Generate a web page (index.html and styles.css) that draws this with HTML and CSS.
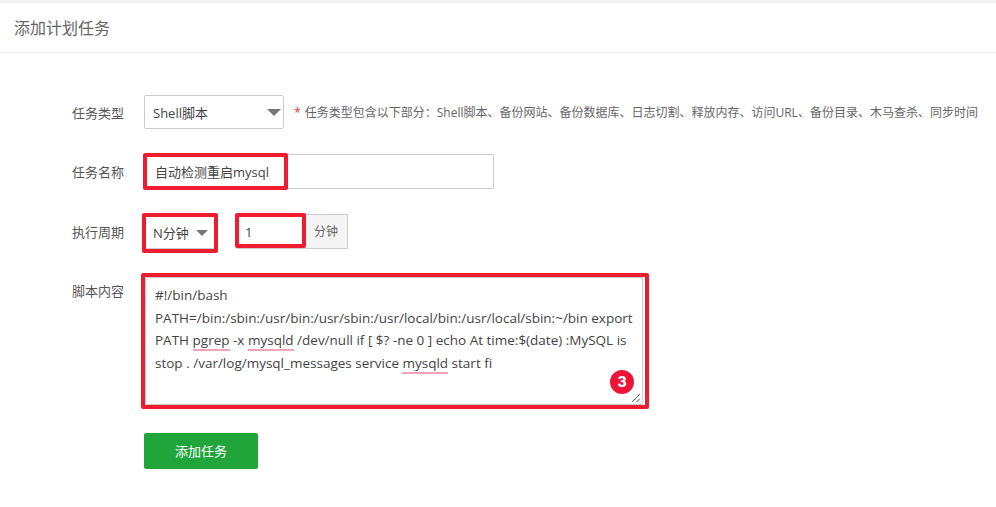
FILE: index.html
```html
<!DOCTYPE html>
<html lang="zh-CN">
<head>
<meta charset="utf-8">
<title>添加计划任务</title>
<link rel="stylesheet" href="styles.css">
</head>
<body>
<header class="head">添加计划任务</header>
<main class="form">
  <div class="row row-type">
    <label class="label">任务类型</label>
    <div class="select select-type">Shell脚本<i class="caret"></i></div>
    <p class="hint"><span class="star">*</span> 任务类型包含以下部分：Shell脚本、备份网站、备份数据库、日志切割、释放内存、访问URL、备份目录、木马查杀、同步时间</p>
  </div>
  <div class="row row-name">
    <label class="label">任务名称</label>
    <div class="input input-name">自动检测重启mysql<b class="mark mark-name"></b></div>
  </div>
  <div class="row row-cycle">
    <label class="label">执行周期</label>
    <div class="select select-cycle">N分钟<i class="caret"></i><b class="mark mark-cycle"></b></div>
    <div class="group">
      <div class="input input-num">1<b class="mark mark-num"></b></div>
      <div class="addon">分钟</div>
    </div>
  </div>
  <div class="row row-script">
    <label class="label label-top">脚本内容</label>
    <div class="textarea">
      #!/bin/bash<br>
      PATH=/bin:/sbin:/usr/bin:/usr/sbin:/usr/local/bin:/usr/local/sbin:~/bin export<br>
      PATH <u class="spell">pgrep</u> -x <u class="spell">mysqld</u> /dev/null if [ $? -ne 0 ] echo At time:$(date) :MySQL is<br>
      stop . /var/log/mysql_messages service <u class="spell">mysqld</u> start fi
      <b class="mark mark-script"></b>
      <span class="badge">3</span>
      <svg class="grip" width="10" height="10" viewBox="0 0 10 10"><path d="M1 9 9 1M5.500 9 9 5.500" stroke="#555" stroke-width="1" fill="none"/></svg>
    </div>
  </div>
  <button class="submit" type="button">添加任务</button>
</main>
</body>
</html>
```
FILE: styles.css
```css
* { box-sizing: border-box; }
html, body { margin: 0; height: 100%; background: #fff; overflow: hidden; }
body {
  font-family: "Open Sans", "Noto Sans CJK SC", sans-serif;
  font-size: 13px;
  color: #555;
  border-top: 3px solid #f0f0f0;
}
.head {
  height: 50px;
  padding-left: 14px;
  line-height: 50px;
  font-size: 16px;
  color: #666;
  border-bottom: 1px solid #f0f0f0;
}
.form { padding: 42px 0 0 72px; }
.row { display: flex; align-items: center; }
.row-type { height: 34px; }
.row-name { height: 35px; margin-top: 25px; }
.row-cycle { height: 35px; margin-top: 25px; }
.row-script { height: 128px; margin-top: 28px; align-items: flex-start; }
.label { width: 72px; flex: none; color: #555; }
.label-top { padding-top: 4px; }
.select, .input, .textarea {
  position: relative;
  background: #fff;
  border: 1px solid #ccc;
  color: #444;
}
.select { display: flex; align-items: center; padding-left: 8px; border-radius: 2px; }
.select-type { width: 140px; height: 34px; flex: none; }
.select-cycle { width: 72px; height: 33px; margin-top: 1px; }
.caret {
  position: absolute;
  right: 2px;
  top: 13px;
  border-left: 7px solid transparent;
  border-right: 7px solid transparent;
  border-top: 7px solid #777;
}
.select-cycle .caret { right: 7px; top: 13px; border-left-width: 6px; border-right-width: 6px; border-top-width: 6px; }
.hint { margin: 0 0 0 10px; font-size: 12px; color: #666; white-space: nowrap; }
.star { color: #e33; margin-right: 1px; }
.input { display: flex; align-items: center; padding-left: 10px; border-radius: 1px; }
.input-name { width: 350px; height: 35px; }
.group { display: flex; margin-left: 20px; }
.input-num { width: 69px; height: 35px; padding-left: 8px; }
.addon {
  width: 43px;
  height: 35px;
  line-height: 33px;
  text-align: center;
  font-size: 12px;
  color: #666;
  background: #f5f5f5;
  border: 1px solid #ccc;
  border-left: 0;
}
.textarea {
  width: 498px;
  height: 128px;
  padding: 6px 0 0 9px;
  font-size: 13.5px;
  line-height: 22.500px;
  white-space: nowrap;
  margin-left: 1px;
}
.spell { text-decoration: none; border-bottom: 2px solid #f3a3b8; }
.mark { position: absolute; border: 4px solid #ee1c2e; border-radius: 2px; pointer-events: none; }
.mark-name { left: -2px; top: -2px; width: 145px; height: 37px; }
.mark-cycle { left: -3px; top: -4px; width: 76px; height: 40px; }
.mark-num { left: -2px; top: -2px; width: 71px; height: 35px; }
.mark-script { left: -5px; top: -5px; width: 508px; height: 136px; }
.badge {
  position: absolute;
  right: 8px;
  bottom: 10px;
  width: 24px;
  height: 24px;
  line-height: 24px;
  border-radius: 50%;
  background: #ee1438;
  color: #fff;
  font-family: "Inter", sans-serif;
  font-size: 14px;
  font-weight: 800;
  text-align: center;
}
.grip { position: absolute; right: 1px; bottom: 1px; }
.submit {
  display: block;
  width: 114px;
  height: 36px;
  margin: 28px 0 0 72px;
  padding-bottom: 2px;
  border: 0;
  border-radius: 2px;
  background: #20a53a;
  color: #fff;
  font: inherit;
  font-size: 13px;
}
```
